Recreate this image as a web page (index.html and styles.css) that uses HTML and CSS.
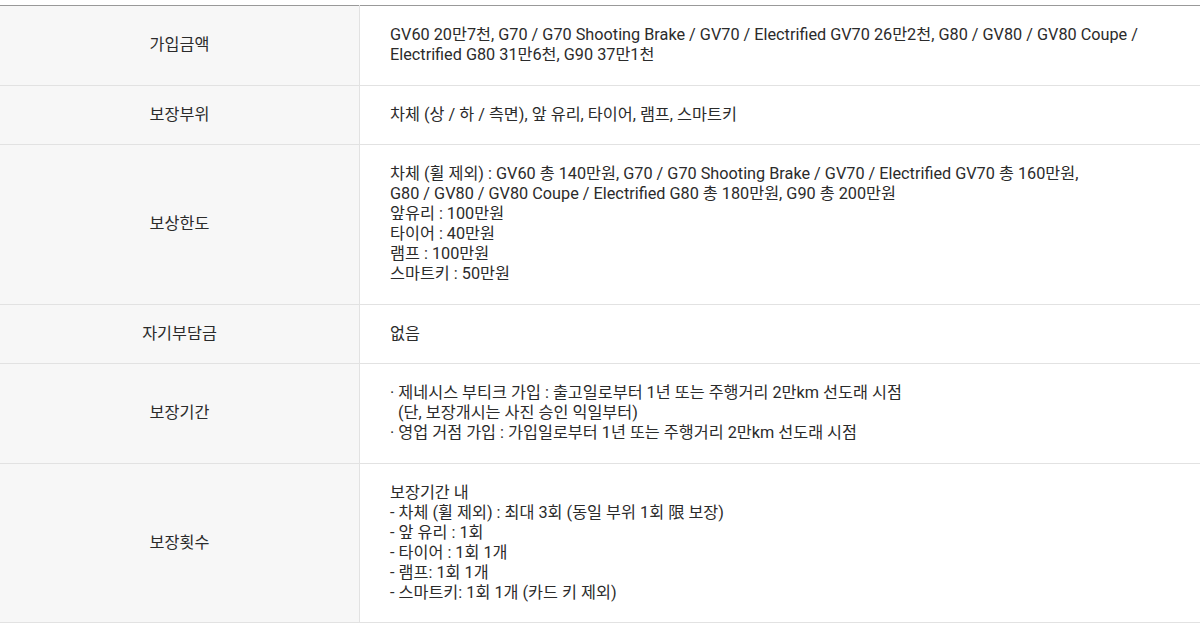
FILE: index.html
```html
<!DOCTYPE html>
<html lang="ko">
<head>
  <meta charset="UTF-8" />
  <meta name="viewport" content="width=device-width, initial-scale=1" />
  <title>보장 안내</title>
  <link rel="stylesheet" href="styles.css">
</head>
<body>

<table class="info-table">
  <tr>
    <th>가입금액</th>
    <td>GV60 20만7천, G70 / G70 Shooting Brake / GV70 / Electrified GV70 26만2천, G80 / GV80 / GV80 Coupe /<br>Electrified G80 31만6천, G90 37만1천</td>
  </tr>
  <tr>
    <th>보장부위</th>
    <td>차체 (상 / 하 / 측면), 앞 유리, 타이어, 램프, 스마트키</td>
  </tr>
  <tr>
    <th>보상한도</th>
    <td>차체 (휠 제외) : GV60 총 140만원, G70 / G70 Shooting Brake / GV70 / Electrified GV70 총 160만원,<br>G80 / GV80 / GV80 Coupe / Electrified G80 총 180만원, G90 총 200만원<br>앞유리 : 100만원<br>타이어 : 40만원<br>램프 : 100만원<br>스마트키 : 50만원</td>
  </tr>
  <tr>
    <th>자기부담금</th>
    <td>없음</td>
  </tr>
  <tr>
    <th>보장기간</th>
    <td>· 제네시스 부티크 가입 : 출고일로부터 1년 또는 주행거리 2만km 선도래 시점<br>&nbsp;&nbsp;(단, 보장개시는 사진 승인 익일부터)<br>· 영업 거점 가입 : 가입일로부터 1년 또는 주행거리 2만km 선도래 시점</td>
  </tr>
  <tr>
    <th>보장횟수</th>
    <td>보장기간 내<br>- 차체 (휠 제외) : 최대 3회 (동일 부위 1회 限 보장)<br>- 앞 유리 : 1회<br>- 타이어 : 1회 1개<br>- 램프: 1회 1개<br>- 스마트키: 1회 1개 (카드 키 제외)</td>
  </tr>
</table>

</body>
</html>
```

FILE: styles.css
```css
body {
  margin: 0;
  padding-top: 5px;
  background: #fff;
  font-family: Roboto, "Noto Sans CJK KR", sans-serif;
  color: #2b2b2b;
}

.info-table {
  width: 100%;
  border-collapse: collapse;
  border-top: 1px solid #999;
  font-size: 16.25px;
  line-height: 20px;
}

.info-table tr {
  border-bottom: 1px solid #e2e2e2;
}

.info-table th {
  width: 359px;
  padding: 19.25px 0;
  background: #f7f7f7;
  border-right: 1px solid #e2e2e2;
  font-weight: 400;
  text-align: center;
  vertical-align: middle;
}

.info-table td {
  padding: 19.25px 30px;
  text-align: left;
  vertical-align: middle;
}
```
